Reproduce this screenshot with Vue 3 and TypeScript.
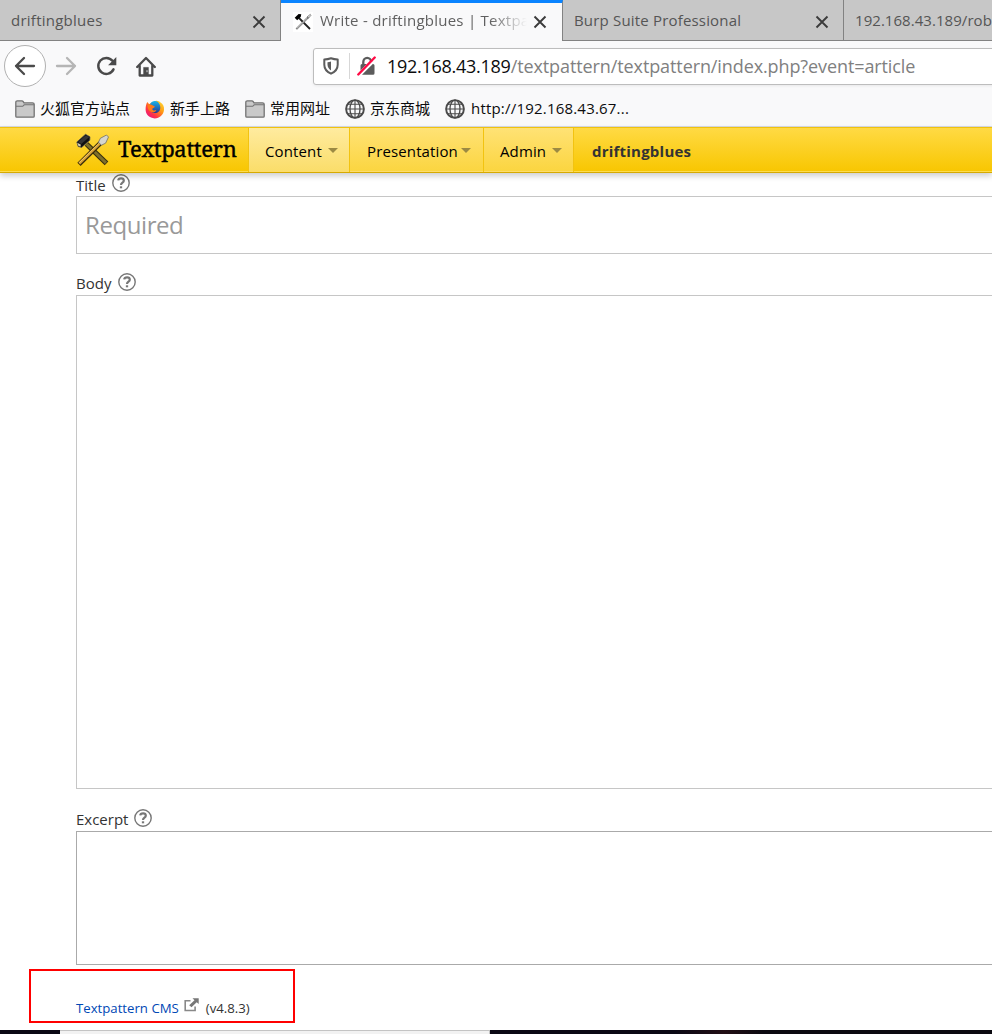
<script setup lang="ts">
interface Tab { title: string; active?: boolean; cls: string }
interface Bookmark { label: string; icon: 'folder' | 'firefox' | 'globe'; cls: string }
interface MenuItem { label: string; cls: string }

const tabs: Tab[] = [
  { title: 'driftingblues', cls: 't1' },
  { title: 'Write - driftingblues | Textpa', active: true, cls: 't2' },
  { title: 'Burp Suite Professional', cls: 't3' },
  { title: '192.168.43.189/rob', cls: 't4' },
]
const bookmarks: Bookmark[] = [
  { label: '火狐官方站点', icon: 'folder', cls: 'b1' },
  { label: '新手上路', icon: 'firefox', cls: 'b2' },
  { label: '常用网址', icon: 'folder', cls: 'b3' },
  { label: '京东商城', icon: 'globe', cls: 'b4' },
  { label: 'http://192.168.43.67...', icon: 'globe', cls: 'b5' },
]
const menu: MenuItem[] = [
  { label: 'Content', cls: 'm1' },
  { label: 'Presentation', cls: 'm2' },
  { label: 'Admin', cls: 'm3' },
]
const fields = [
  { label: 'Title', cls: 'title' },
  { label: 'Body', cls: 'body' },
  { label: 'Excerpt', cls: 'excerpt' },
]
</script>

<template>
  <div class="screen">
    <div class="tabs">
      <div v-for="t in tabs" :key="t.title" class="tab" :class="[t.cls, { active: t.active }]">
        <svg v-if="t.active" class="fav" width="20" height="20" viewBox="0 0 20 20">
          <rect width="20" height="20" fill="#fff" />
          <path d="M6 6 17 17" stroke="#222" stroke-width="1.8" />
          <path d="M3.3 17.2 15.5 5" stroke="#777" stroke-width="1.9" />
          <path d="M3.8 16.5 14 6.4" stroke="#eee" stroke-width=".7" />
          <path d="m14 5 3.3-2.6.7.8-2.8 3.4" fill="none" stroke="#888" />
          <path d="M1.7 5.8 5.6 2l2.7.3L7.7 5 4.2 8.2z" fill="#000" />
        </svg>
        <span class="tab-title">{{ t.title }}</span>
        <svg v-if="t.cls !== 't4'" class="close" width="14" height="14" viewBox="0 0 14 14">
          <path d="m1.5 1.5 11 11m0-11-11 11" stroke="#3b3b3b" stroke-width="1.9" />
        </svg>
      </div>
    </div>

    <div class="nav">
      <div class="back">
        <svg width="22" height="20" viewBox="0 0 22 20" fill="none" stroke="#4a4a4a" stroke-width="2.3" stroke-linecap="round" stroke-linejoin="round"><path d="M20 10H2m8-8-8 8 8 8" /></svg>
      </div>
      <svg class="fwd" width="22" height="20" viewBox="0 0 22 20" fill="none" stroke="#b5b5b5" stroke-width="2.3" stroke-linecap="round" stroke-linejoin="round"><path d="M2 10h18m-8-8 8 8-8 8" /></svg>
      <svg class="reload" width="22" height="20" viewBox="0 0 22 20" fill="none"><path d="M16.500 4.800A8 8 0 1 0 17.500 13.400" stroke="#4a4a4a" stroke-width="2.500" stroke-linecap="round" /><path d="M20.300 1v8.300h-8.200z" fill="#4a4a4a" /></svg>
      <svg class="home" width="20" height="21" viewBox="0 0 20 21" fill="none" stroke="#4a4a4a" stroke-linejoin="round" stroke-linecap="round"><path d="M1.200 11 10 2l8.800 9M3.700 9.500v10h12.600v-10" stroke-width="2.300" /><path d="M7.600 19v-7.600h4.800V19z" fill="#4a4a4a" stroke-width=".5" /><path d="M11 14.600v1.200" stroke="#ddd" stroke-width="1" /></svg>
      <div class="url">
        <svg class="shield" width="16" height="18" viewBox="0 0 16 18"><path d="M8 1.200C5.600 2 3.400 2.400 1.300 2.600v5.100c0 4 2.300 7 6.700 9 4.400-2 6.700-5 6.700-9V2.600C12.600 2.400 10.400 2 8 1.200Z" fill="none" stroke="#5c5c5c" stroke-width="2" stroke-linejoin="round" /><path d="M8 4.600v9C5.700 12.100 4.500 10 4.500 7.600V5.300C5.700 5.100 6.900 4.900 8 4.600Z" fill="#5c5c5c" /></svg>
        <i class="sep"></i>
        <svg class="lock" width="20" height="20" viewBox="0 0 20 20"><path d="M6.300 9V6a3.900 4.200 0 0 1 7.800 0" fill="none" stroke="#5c5c5c" stroke-width="2.300" /><path d="M5 18.800 15.800 8h.2q1.500 0 1.500 1.500v7.800q0 1.500-1.500 1.500zM3.500 14.500V9.500Q3.500 8 5 8h4.800z" fill="#5c5c5c" /><path d="M1.300 18.500 17.700 1.500" stroke="#ff0b45" stroke-width="2.400" stroke-linecap="round" /></svg>
        <span class="address"><b>192.168.43.189</b>/textpattern/textpattern/index.php?event=article</span>
      </div>
    </div>

    <div class="bookmarks">
      <div v-for="b in bookmarks" :key="b.label" class="bm" :class="b.cls">
        <svg v-if="b.icon === 'folder'" width="20" height="18" viewBox="0 0 20 18"><path d="M.8 16.200V2.300Q.8.800 2.300.800h4.500q1 0 1.600 1l.6 1h8.500q1.700 0 1.700 1.500v11.900q0 1-1 1H1.800q-1 0-1-1Z" fill="#c9c9c9" stroke="#737373" stroke-width="1.300" /><path d="M1 6.300h6.700l1.500-1.500H19" fill="none" stroke="#737373" stroke-width="1.100" /></svg>
        <svg v-else-if="b.icon === 'globe'" width="20" height="20" viewBox="0 0 20 20" fill="none" stroke="#4a4a4a"><circle cx="10" cy="10" r="8.900" stroke-width="1.900" /><ellipse cx="10" cy="10" rx="5" ry="8.900" stroke-width="1.300" /><path d="M10 1v18M1 10h18M2.800 5.200h14.400M2.800 14.800h14.400" stroke-width="1.100" /></svg>
        <svg v-else width="20" height="20" viewBox="0 0 20 20">
          <defs>
            <linearGradient id="fox" x1="1" y1="0" x2=".1" y2="1"><stop offset="0" stop-color="#ffe63c" /><stop offset=".4" stop-color="#ff9a12" /><stop offset=".72" stop-color="#ff3347" /><stop offset="1" stop-color="#e3128b" /></linearGradient>
            <linearGradient id="sea" x1="0" y1="0" x2="0" y2="1"><stop offset="0" stop-color="#16b4ec" /><stop offset="1" stop-color="#26368f" /></linearGradient>
          </defs>
          <path d="M2.300 3.100 4.200 5.200C5.600 4 7 3.200 9 2.700 11 .9 14 1.800 15.500 3.500 18 5 19.400 7.600 19 11c-.5 5-4.500 8.400-9.300 8.400C4.500 19.400.6 15.400.6 10.600c0-3.200.6-5.500 1.700-7.500Z" fill="url(#fox)" />
          <path d="M5 5.200C7 1.800 11.500.500 14 4.500c2.400 3.300 1.600 8.500-2.800 9.500-3.400.6-5.700-1.300-6.200-3.600z" fill="url(#sea)" />
          <path d="M2.800 5.200 6 5.400 8.900 7c1.200.3 1.200 1.300-.2 1.700l-1.500 1c.1 1.800 2.200 2.200 4.200 1.300-.7 2.300-3.300 3-5.600 1.800C3 11.200 2.200 8 2.800 5.200Z" fill="#ff7a18" />
        </svg>
        <span>{{ b.label }}</span>
      </div>
    </div>

    <header class="header">
      <div class="brand">
        <svg width="34" height="34" viewBox="0 0 34 34">
          <path d="M10.500 11 30.500 30.300" stroke="#37300f" stroke-width="5.200" />
          <path d="M10.500 11 30 29.800" stroke="#80702a" stroke-width="3" />
          <path d="M3 31.300 24.500 10" stroke="#392c0b" stroke-width="4.600" />
          <path d="M3.300 30.500 24 10.300" stroke="#d69f35" stroke-width="2.500" />
          <path d="M3.200 29.900 23.300 10" stroke="#f2cb70" stroke-width=".9" />
          <path d="m22.500 9.300 1.800-4L30.500 2l2 2-2.900 6.200-4.200 2z" fill="#d6d6ce" stroke="#706f65" stroke-width=".8" />
          <path d="M.8 9 9.500 1.300 14 3.800l-.2 3.400-8.200 7.200-3.500-.9z" fill="#111" stroke="#555" stroke-width=".7" />
          <path d="m2 9 7.600-6.500 3.700 1.600-8 7z" fill="#353535" /><path d="m1.300 9.700 3.400 1.700-.1 2.100-2.100-.4z" fill="#d5d0b1" />
        </svg>
        <span>Textpattern</span>
      </div>
      <div v-for="m in menu" :key="m.label" class="item" :class="m.cls"><span>{{ m.label }}</span><i></i></div>
      <div class="site"><span>driftingblues</span></div>
    </header>

    <main>
      <section v-for="f in fields" :key="f.label" :class="f.cls">
        <div class="label"><span>{{ f.label }}</span>
          <svg width="18" height="18" viewBox="0 0 18 18" fill="none" stroke="#777"><circle cx="9" cy="9" r="8.200" stroke-width="1.400" /><path d="M6.200 6.400C6.500 3.900 11.800 3.600 11.800 6.700c0 2-2.800 2-2.800 4.300" stroke-width="2.200" /><path d="M9 12.300v2" stroke-width="2.300" /></svg>
        </div>
        <div class="box"><span v-if="f.label === 'Title'">Required</span></div>
      </section>
    </main>

    <footer class="foot">
      <a>Textpattern CMS</a>
      <svg width="15" height="14" viewBox="0 0 15 14"><path d="M6.500 2.700H1.200v9.800h9.900V8.500" fill="none" stroke="#888" stroke-width="1.600" /><path d="M8.500.300H14.700V6L12.700 4.200 7.500 9.300 5.200 7.200l5.300-5z" fill="#777" /></svg>
      <span>(v4.8.3)</span>
    </footer>
    <div class="mark"></div>
    <div class="desktop"><div class="taskbar"></div></div>
  </div>
</template>

<style>
body { margin: 0; overflow: hidden; }
</style>
<style scoped>
.screen { position: relative; width: 992px; height: 1034px; overflow: hidden; background: #fff; font-family: "Open Sans", "Noto Sans", "Noto Sans CJK SC", sans-serif; color: #333; display: flex; flex-direction: column; }
.screen * { box-sizing: border-box; }
svg { display: block; flex: none; }
span { white-space: nowrap; }
.tabs { height: 41px; display: flex; flex: none; background: #c7c7c7; }
.tab { width: 281px; flex: none; height: 41px; padding: 0 14px 0 11px; display: flex; align-items: center; border-right: 1px solid #828282; border-bottom: 1px solid #828282; color: #555; font-size: 15px; letter-spacing: .25px; }
.tab.active { width: 282px; background: #f9f9fa; border-bottom: 0; border-top: 3px solid #0a84ff; padding-left: 12px; color: #606060; }
.tab.t4 { width: 148px; border-right: 0; padding-right: 0; letter-spacing: .05px; }
.tab.t3 { letter-spacing: .18px; }
.fav { margin: 0 7px 0 0; }
.tab-title { flex: 1; line-height: 24px; }
.t2 .tab-title { flex: none; width: 207px; margin: -4px 6px 0 0; mask-image: linear-gradient(90deg, #000 82%, transparent); }
.close { margin-top: 3px; }
.t2 .close { margin-top: 0; }
.nav { height: 50px; flex: none; background: #f9f9fa; display: flex; align-items: center; padding-left: 4px; }
.back { width: 42px; height: 42px; flex: none; border: 1px solid #b1b1b1; border-radius: 50%; background: #fff; display: grid; place-items: center; }
.fwd { margin-left: 9px; }
.reload { margin-left: 19px; }
.home { margin-left: 18px; }
.url { margin-left: 157px; width: 700px; flex: none; height: 37px; border: 1px solid #bdbdbd; border-radius: 3px; background: #fff; display: flex; align-items: center; padding-left: 9px; box-shadow: 0 1px 3px #0001; }
.shield { margin-top: -1px; }
.sep { width: 1px; height: 26px; background: #d7d7d7; margin: 0 7px 0 10px; }
.address { margin-left: 10px; font-size: 18px; color: #808080; letter-spacing: -.1px; }
.address b { font-weight: 400; color: #0c0c0d; letter-spacing: -.27px; }
.bookmarks { height: 36px; flex: none; background: #f9f9fa; border-bottom: 1px solid #d8dbe2; display: flex; align-items: center; color: #0c0c0d; font-size: 15px; padding: 1px 0 0 15px; }
.bm { width: 100px; flex: none; display: flex; align-items: center; gap: 5px; }
.bm span { margin-top: -4px; }
.b1 { width: 130px; } .b5 { width: 240px; gap: 6px; letter-spacing: .2px; }
.b5 span { margin-top: -2px; }
.header { height: 46px; flex: none; border-top: 1px solid #f0c20e; border-bottom: 1px solid #d6aa00; background: linear-gradient(#ffda44, #f8c600); box-shadow: inset 0 -1px 0 #fddc4d, 0 3px 6px #0003; display: flex; position: relative; }
.brand { width: 248px; display: flex; align-items: center; padding: 0 0 2px 76px; font-family: "Noto Serif", "DejaVu Serif", serif; font-size: 22px; letter-spacing: -.35px; color: #000; gap: 8px; }
.brand svg { margin-top: 1px; }
.brand span { margin-top: -3px; -webkit-text-stroke: .4px #000; }
.item { border-left: 1px solid #f2c310; background: linear-gradient(#ffe275, #fbd53f); color: #000; font-size: 15px; letter-spacing: .13px; display: flex; align-items: center; padding: 2px 0 0 16px; box-shadow: inset 0 -1px 0 #fddc6d; }
.item i { border: 5px solid transparent; border-top-color: #9c8a43; border-bottom: 0; margin: -2px 0 0 5px; }
.m1 { width: 101px; background: linear-gradient(#ffeb9f, #fadd69); } .m2 { width: 134px; } .m3 { width: 90px; }
.m1 i { margin-left: 6px; }
.m2 { padding-left: 17px; } .m2 i { margin-left: 3px; }
.m3 i { margin-left: 6px; }
.site { border-left: 1px solid #f2c310; padding: 2px 0 0 18px; font-weight: 700; font-size: 15px; letter-spacing: .22px; display: flex; align-items: center; }
main { padding-left: 76px; height: 792px; flex: none; }
.label { display: flex; align-items: center; font-size: 15px; height: 23px; gap: 6px; }
.label span { padding-top: 1px; line-height: 20px; }
.label svg { margin-top: -3px; }
.box { width: 960px; border: 1px solid #c6c6c6; background: #fff; }
.title .box { height: 58px; padding: 0 0 2px 8px; display: flex; align-items: center; color: #999; font-size: 24px; letter-spacing: -.42px; }
.body { padding-top: 18px; }
.body .label { padding-bottom: 1px; gap: 7px; }
.excerpt .label { padding-bottom: 1px; }
.body .label span, .excerpt .label span { margin-top: -2px; }
.body .box { height: 494px; }
.excerpt { padding-top: 19px; }
.excerpt .box { height: 134px; border-color: #aaa; }
.foot { margin-top: 33px; height: 20px; padding-left: 76px; display: flex; align-items: center; font-size: 13.2px; }
.foot a { color: #0048b5; white-space: nowrap; }
.foot svg { margin: -6px 7px 0 5px; }
.mark { position: absolute; left: 29px; top: 969px; width: 266px; height: 54px; border: 2px solid #f00; }
.desktop { margin-top: auto; height: 4px; flex: none; background: linear-gradient(90deg, #0a0814 0 68%, #220e14 73%, #0b0910 77%); padding-left: 60px; }
.taskbar { width: 430px; height: 4px; background: #f2f2f2; border-top: 1px solid #c4c4c4; border-right: 1px solid #c4c4c4; }
</style>
